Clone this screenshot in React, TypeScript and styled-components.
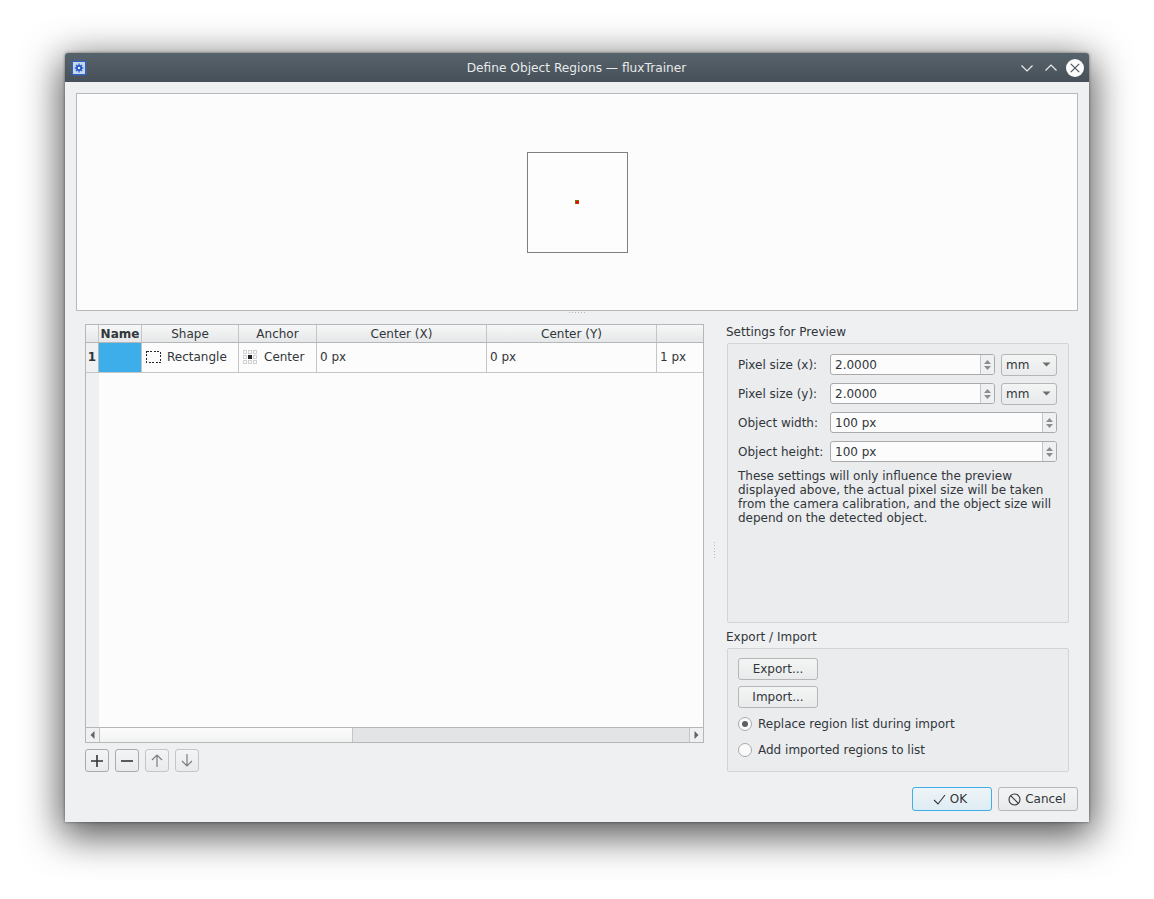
import styled, { createGlobalStyle } from 'styled-components'

const GlobalStyle = createGlobalStyle`
  html, body {
    margin: 0;
    background: #ffffff;
  }
  body {
    font-family: "DejaVu Sans", "Noto Sans", sans-serif;
    font-size: 12px;
    color: #31363b;
  }
`

const Page = styled.div`
  width: 1154px;
  height: 899px;
  padding: 53px 0 0 65px;
  box-sizing: border-box;
  overflow: hidden;
`

const Window = styled.div`
  width: 1024px;
  height: 769px;
  display: flex;
  flex-direction: column;
  background: #eff0f1;
  border-radius: 3px 3px 0 0;
  box-shadow: 0 10px 38px 4px rgba(0, 0, 0, 0.68), 0 0 3px rgba(0, 0, 0, 0.5);
`

const TitleBar = styled.div`
  height: 29px;
  flex: none;
  display: flex;
  align-items: center;
  padding: 0 5px;
  background: linear-gradient(#57636b, #475058);
  border-radius: 3px 3px 0 0;
`

const AppIcon = styled.svg`
  width: 18px;
  height: 18px;
  flex: none;
`

const Title = styled.div`
  flex: 1;
  text-align: center;
  color: #e8eaeb;
  font-size: 12.2px;
  padding-left: 47px;
`

const TitleButtons = styled.div`
  display: flex;
  align-items: center;
  gap: 6px;
`

const TitleButton = styled.svg`
  width: 18px;
  height: 18px;
  display: block;
`

const Body = styled.div`
  flex: 1;
  min-height: 0;
  display: flex;
  flex-direction: column;
  padding: 11px 11px 11px;
`

const Preview = styled.div`
  height: 216px;
  flex: none;
  display: flex;
  align-items: center;
  justify-content: center;
  background: #fcfcfc;
  border: 1px solid #b8b9ba;
`

const ObjectBox = styled.div`
  width: 99px;
  height: 99px;
  display: flex;
  align-items: center;
  justify-content: center;
  border: 1px solid #7f7f7f;
  background: #fdfdfd;
`

const Marker = styled.div`
  width: 2px;
  height: 2px;
  margin: 0 1px 1px 0;
  border: 1px solid;
  border-color: #6e7a10 #d02800 #d02800 #6e7a10;
  background: #ff0000;
`

const HSplit = styled.div`
  height: 13px;
  flex: none;
  display: flex;
  justify-content: center;
  padding-top: 1px;
  box-sizing: border-box;
`

const HGrip = styled.div`
  width: 17px;
  height: 1px;
  background: repeating-linear-gradient(90deg, #b5b6b7 0 1px, transparent 1px 3px);
`

const Lower = styled.div`
  flex: 1;
  min-height: 0;
  display: flex;
  padding: 0 9px;
`

const LeftColumn = styled.div`
  width: 619px;
  flex: none;
  display: flex;
  flex-direction: column;
`

const TableFrame = styled.div`
  height: 419px;
  flex: none;
  display: flex;
  flex-direction: column;
  border: 1px solid #b5b6b7;
  box-sizing: border-box;
  background: #fcfcfc;
`

const TableGrid = styled.div`
  flex: 1;
  min-height: 0;
  display: grid;
  grid-template-columns: 13px 43px 97px 78px 170px 170px 1fr;
  grid-template-rows: 18px 30px 1fr;
`

const HeaderCell = styled.div<{ $bold?: boolean }>`
  display: flex;
  align-items: center;
  justify-content: center;
  box-sizing: border-box;
  font-weight: ${p => (p.$bold ? 700 : 400)};
  white-space: nowrap;
  overflow: hidden;
  background: linear-gradient(#f6f7f7, #e6e7e8);
  border-right: 1px solid #c4c5c6;
  border-bottom: 1px solid #b5b6b7;
`

const RowHead = styled.div`
  display: flex;
  align-items: center;
  justify-content: center;
  font-weight: 700;
  padding-bottom: 1px;
  background: #eff0f1;
  box-sizing: border-box;
  border-right: 1px solid #b5b6b7;
  border-bottom: 1px solid #c4c5c6;
`

const Cell = styled.div`
  display: flex;
  align-items: center;
  gap: 6px;
  padding: 0 0 2px 3px;
  white-space: nowrap;
  overflow: hidden;
  box-sizing: border-box;
  border-right: 1px solid #c4c5c6;
  border-bottom: 1px solid #c4c5c6;
`

const ColorCell = styled.div`
  background: #3daee9;
  box-sizing: border-box;
  border-right: 1px solid #c4c5c6;
  border-bottom: 1px solid #c4c5c6;
`

const LastCell = styled(Cell)`
  border-right: 0;
`

const LastHeader = styled(HeaderCell)`
  border-right: 0;
`

const Gutter = styled.div`
  background: #eff0f1;
`

const Empty = styled.div`
  grid-column: 2 / -1;
`

const CellIcon = styled.svg`
  flex: none;
  display: block;
  margin-left: 1px;
`

const AnchorIcon = styled(CellIcon)`
  margin-right: 1px;
`

const ScrollBar = styled.div`
  height: 14px;
  flex: none;
  display: flex;
  border-top: 1px solid #b5b6b7;
  background: #e3e4e5;
`

const ScrollButton = styled.div<{ $right?: boolean }>`
  width: 13px;
  flex: none;
  display: flex;
  align-items: center;
  justify-content: center;
  background: #eff0f1;
  border-${p => (p.$right ? 'left' : 'right')}: 1px solid #c4c5c6;
`

const Thumb = styled.div`
  width: 252px;
  flex: none;
  background: linear-gradient(#fcfcfc, #f0f1f1);
  border-right: 1px solid #c4c5c6;
`

const Track = styled.div`
  flex: 1;
`

const ListTools = styled.div`
  display: flex;
  gap: 6px;
  margin-top: 6px;
`

const ToolButton = styled.div<{ $muted?: boolean }>`
  width: 24px;
  height: 23px;
  display: flex;
  align-items: center;
  justify-content: center;
  box-sizing: border-box;
  border-radius: 3px;
  background: linear-gradient(#f3f4f4, #e9eaeb);
  border: 1px solid ${p => (p.$muted ? '#c4c5c6' : '#a9aaab')};
`

const VSplit = styled.div`
  width: 22px;
  flex: none;
  display: flex;
  justify-content: center;
  height: 452px;
  align-items: center;
`

const VGrip = styled.div`
  width: 1px;
  height: 17px;
  margin-right: 1px;
  background: repeating-linear-gradient(#b5b6b7 0 1px, transparent 1px 3px);
`

const RightColumn = styled.div`
  flex: 1;
  display: flex;
  flex-direction: column;
`

const GroupTitle = styled.div`
  height: 19px;
  line-height: 16px;
`

const Group = styled.div<{ $height: number }>`
  height: ${p => p.$height}px;
  margin-left: 1px;
  box-sizing: border-box;
  background: #ebecee;
  border: 1px solid #d3d4d5;
  border-radius: 2px;
  padding: 10px 10px;
  display: flex;
  flex-direction: column;
`

const ExportGroup = styled(Group)`
  padding-top: 9px;
`

const ExportTitle = styled(GroupTitle)`
  margin-top: 6px;
`

const FormRow = styled.div`
  display: flex;
  align-items: center;
  height: 21px;
  margin-bottom: 8px;
`

const FormLabel = styled.div`
  width: 92px;
  flex: none;
  white-space: nowrap;
`

const SpinBox = styled.div<{ $width: number }>`
  width: ${p => p.$width}px;
  height: 21px;
  flex: none;
  display: flex;
  box-sizing: border-box;
  background: #fcfcfc;
  border: 1px solid #a9aaab;
  border-radius: 3px;
`

const SpinValue = styled.div`
  flex: 1;
  padding-left: 4px;
  line-height: 20px;
`

const SpinArrows = styled.div`
  width: 13px;
  flex: none;
  display: flex;
  align-items: center;
  justify-content: center;
  background: #eff0f1;
  border-left: 1px solid #c4c5c6;
  border-radius: 0 2px 2px 0;
`

const Combo = styled.div`
  width: 56px;
  height: 22px;
  flex: none;
  margin-left: 6px;
  display: flex;
  align-items: center;
  justify-content: space-between;
  padding: 0 5px 0 4px;
  box-sizing: border-box;
  background: linear-gradient(#f3f4f4, #e9eaeb);
  border: 1px solid #b5b6b7;
  border-radius: 3px;
`

const Note = styled.div`
  line-height: 14px;
  margin-top: -1px;
  width: 320px;
`

const PushButton = styled.div`
  width: 80px;
  height: 22px;
  display: flex;
  align-items: center;
  justify-content: center;
  gap: 4px;
  flex: none;
  box-sizing: border-box;
  border-radius: 3px;
  background: linear-gradient(#f3f4f4, #e9eaeb);
  border: 1px solid #b5b6b7;
`

const CancelButton = styled(PushButton)`
  height: 24px;
  padding-right: 2px;
`

const OkButton = styled(PushButton)`
  height: 24px;
  padding-right: 4px;
  background: linear-gradient(#eef4f7, #deecf3);
  border-color: #3daee9;
`

const ExportStack = styled.div`
  display: flex;
  flex-direction: column;
  gap: 6px;
`

const RadioRow = styled.div`
  display: flex;
  align-items: center;
  gap: 6px;
  height: 14px;
  margin-top: 12px;
`

const FirstRadioRow = styled(RadioRow)`
  margin-top: 9px;
`

const Radio = styled.div`
  width: 14px;
  height: 14px;
  flex: none;
  display: flex;
  align-items: center;
  justify-content: center;
  box-sizing: border-box;
  border: 1px solid #a9aaab;
  border-radius: 50%;
  background: #fafafa;
`

const RadioDot = styled.div`
  width: 6px;
  height: 6px;
  border-radius: 50%;
  background: #5c6065;
`

const DialogButtons = styled.div`
  display: flex;
  justify-content: flex-end;
  gap: 6px;
  margin-top: auto;
`

const Glyph = styled.svg`
  display: block;
  flex: none;
`

function SpinGlyph() {
  return (
    <Glyph width="9" height="14" viewBox="0 0 9 14">
      <path d="M4.5 2 L8 6 H1 Z" fill="#8a8d90" />
      <path d="M4.5 12 L8 8 H1 Z" fill="#8a8d90" />
    </Glyph>
  )
}

function Spin({ width, value }: { width: number; value: string }) {
  return (
    <SpinBox $width={width}>
      <SpinValue>{value}</SpinValue>
      <SpinArrows>
        <SpinGlyph />
      </SpinArrows>
    </SpinBox>
  )
}

function UnitCombo() {
  return (
    <Combo>
      mm
      <Glyph width="9" height="5" viewBox="0 0 9 5">
        <path d="M0.5 0.5 H8.5 L4.5 4.5 Z" fill="#6b6e71" />
      </Glyph>
    </Combo>
  )
}

const anchorCells = [0, 5, 10]

export default function App() {
  return (
    <>
      <GlobalStyle />
      <Page>
        <Window>
          <TitleBar>
            <AppIcon viewBox="0 0 18 18">
              <path d="M5 0v18M8 0v18M10 0v18M13 0v18M0 5h18M0 8h18M0 10h18M0 13h18" stroke="#3f6fd0" strokeWidth="1" strokeDasharray="1 1" opacity="0.75" />
              <rect x="2.5" y="2.5" width="13" height="13" fill="#c9d6ec" stroke="#2a62d0" />
              <path d="M9 4.6v8.8M4.6 9h8.8M5.9 5.9l6.2 6.2M12.1 5.9l-6.2 6.2" stroke="#2a62d0" strokeWidth="1.3" />
              <circle cx="9" cy="9" r="3" fill="#1f55bd" />
              <circle cx="9" cy="9" r="1.3" fill="#dfe6f3" />
            </AppIcon>
            <Title>Define Object Regions — fluxTrainer</Title>
            <TitleButtons>
              <TitleButton viewBox="0 0 18 18">
                <path d="M3.5 6.5 L9 12 L14.5 6.5" fill="none" stroke="#eceeef" strokeWidth="1.2" />
              </TitleButton>
              <TitleButton viewBox="0 0 18 18">
                <path d="M3.5 11.5 L9 6 L14.5 11.5" fill="none" stroke="#eceeef" strokeWidth="1.2" />
              </TitleButton>
              <TitleButton viewBox="0 0 18 18">
                <circle cx="9" cy="9" r="9" fill="#fcfcfc" />
                <path d="M4.8 4.8 L13.2 13.2 M13.2 4.8 L4.8 13.2" stroke="#4d575f" strokeWidth="1.2" />
              </TitleButton>
            </TitleButtons>
          </TitleBar>
          <Body>
            <Preview>
              <ObjectBox>
                <Marker />
              </ObjectBox>
            </Preview>
            <HSplit>
              <HGrip />
            </HSplit>
            <Lower>
              <LeftColumn>
                <TableFrame>
                  <TableGrid>
                    <HeaderCell />
                    <HeaderCell $bold>Name</HeaderCell>
                    <HeaderCell>Shape</HeaderCell>
                    <HeaderCell>Anchor</HeaderCell>
                    <HeaderCell>Center (X)</HeaderCell>
                    <HeaderCell>Center (Y)</HeaderCell>
                    <LastHeader />
                    <RowHead>1</RowHead>
                    <ColorCell />
                    <Cell>
                      <CellIcon width="15" height="12" viewBox="0 0 15 12" shapeRendering="crispEdges">
                        <rect x="0.5" y="0.5" width="14" height="11" fill="none" stroke="#232629" strokeDasharray="2 1.5" />
                      </CellIcon>
                      Rectangle
                    </Cell>
                    <Cell>
                      <AnchorIcon width="14" height="14" viewBox="0 0 14 14">
                        {anchorCells.map(y =>
                          anchorCells.map(x => (
                            <rect key={`${x}-${y}`} x={x + 0.5} y={y + 0.5} width="3" height="3" fill="none" stroke="#d0d1d2" />
                          ))
                        )}
                        <rect x="5" y="5" width="4" height="4" fill="#232629" />
                      </AnchorIcon>
                      Center
                    </Cell>
                    <Cell>0 px</Cell>
                    <Cell>0 px</Cell>
                    <LastCell>1 px</LastCell>
                    <Gutter />
                    <Empty />
                  </TableGrid>
                  <ScrollBar>
                    <ScrollButton>
                      <Glyph width="5" height="8" viewBox="0 0 5 8">
                        <path d="M4.5 0 V8 L0.5 4 Z" fill="#5f6366" />
                      </Glyph>
                    </ScrollButton>
                    <Thumb />
                    <Track />
                    <ScrollButton $right>
                      <Glyph width="5" height="8" viewBox="0 0 5 8">
                        <path d="M0.5 0 V8 L4.5 4 Z" fill="#5f6366" />
                      </Glyph>
                    </ScrollButton>
                  </ScrollBar>
                </TableFrame>
                <ListTools>
                  <ToolButton>
                    <Glyph width="12" height="12" viewBox="0 0 12 12">
                      <path d="M0 6h12M6 0v12" stroke="#31363b" strokeWidth="1.6" />
                    </Glyph>
                  </ToolButton>
                  <ToolButton>
                    <Glyph width="12" height="12" viewBox="0 0 12 12">
                      <path d="M0 6h12" stroke="#31363b" strokeWidth="1.6" />
                    </Glyph>
                  </ToolButton>
                  <ToolButton $muted>
                    <Glyph width="12" height="13" viewBox="0 0 12 13">
                      <path d="M6 13V1M1 6l5-5 5 5" fill="none" stroke="#7b7e81" strokeWidth="1.2" />
                    </Glyph>
                  </ToolButton>
                  <ToolButton $muted>
                    <Glyph width="12" height="13" viewBox="0 0 12 13">
                      <path d="M6 0v12M1 7l5 5 5-5" fill="none" stroke="#7b7e81" strokeWidth="1.2" />
                    </Glyph>
                  </ToolButton>
                </ListTools>
              </LeftColumn>
              <VSplit>
                <VGrip />
              </VSplit>
              <RightColumn>
                <GroupTitle>Settings for Preview</GroupTitle>
                <Group $height={280}>
                  <FormRow>
                    <FormLabel>Pixel size (x):</FormLabel>
                    <Spin width={165} value="2.0000" />
                    <UnitCombo />
                  </FormRow>
                  <FormRow>
                    <FormLabel>Pixel size (y):</FormLabel>
                    <Spin width={165} value="2.0000" />
                    <UnitCombo />
                  </FormRow>
                  <FormRow>
                    <FormLabel>Object width:</FormLabel>
                    <Spin width={227} value="100 px" />
                  </FormRow>
                  <FormRow>
                    <FormLabel>Object height:</FormLabel>
                    <Spin width={227} value="100 px" />
                  </FormRow>
                  <Note>
                    These settings will only influence the preview displayed above, the actual pixel size will be taken from the camera calibration, and the object size will depend on the detected object.
                  </Note>
                </Group>
                <ExportTitle>Export / Import</ExportTitle>
                <ExportGroup $height={124}>
                  <ExportStack>
                    <PushButton>Export...</PushButton>
                    <PushButton>Import...</PushButton>
                  </ExportStack>
                  <FirstRadioRow>
                    <Radio>
                      <RadioDot />
                    </Radio>
                    Replace region list during import
                  </FirstRadioRow>
                  <RadioRow>
                    <Radio />
                    Add imported regions to list
                  </RadioRow>
                </ExportGroup>
              </RightColumn>
            </Lower>
            <DialogButtons>
              <OkButton>
                <Glyph width="13" height="11" viewBox="0 0 13 11">
                  <path d="M1 6l4 4 7-9" fill="none" stroke="#31363b" strokeWidth="1.1" />
                </Glyph>
                OK
              </OkButton>
              <CancelButton>
                <Glyph width="13" height="13" viewBox="0 0 13 13">
                  <circle cx="6.5" cy="6.5" r="5.5" fill="none" stroke="#31363b" strokeWidth="1.1" />
                  <path d="M2.6 2.6l7.8 7.8" stroke="#31363b" strokeWidth="1.1" />
                </Glyph>
                Cancel
              </CancelButton>
            </DialogButtons>
          </Body>
        </Window>
      </Page>
    </>
  )
}
